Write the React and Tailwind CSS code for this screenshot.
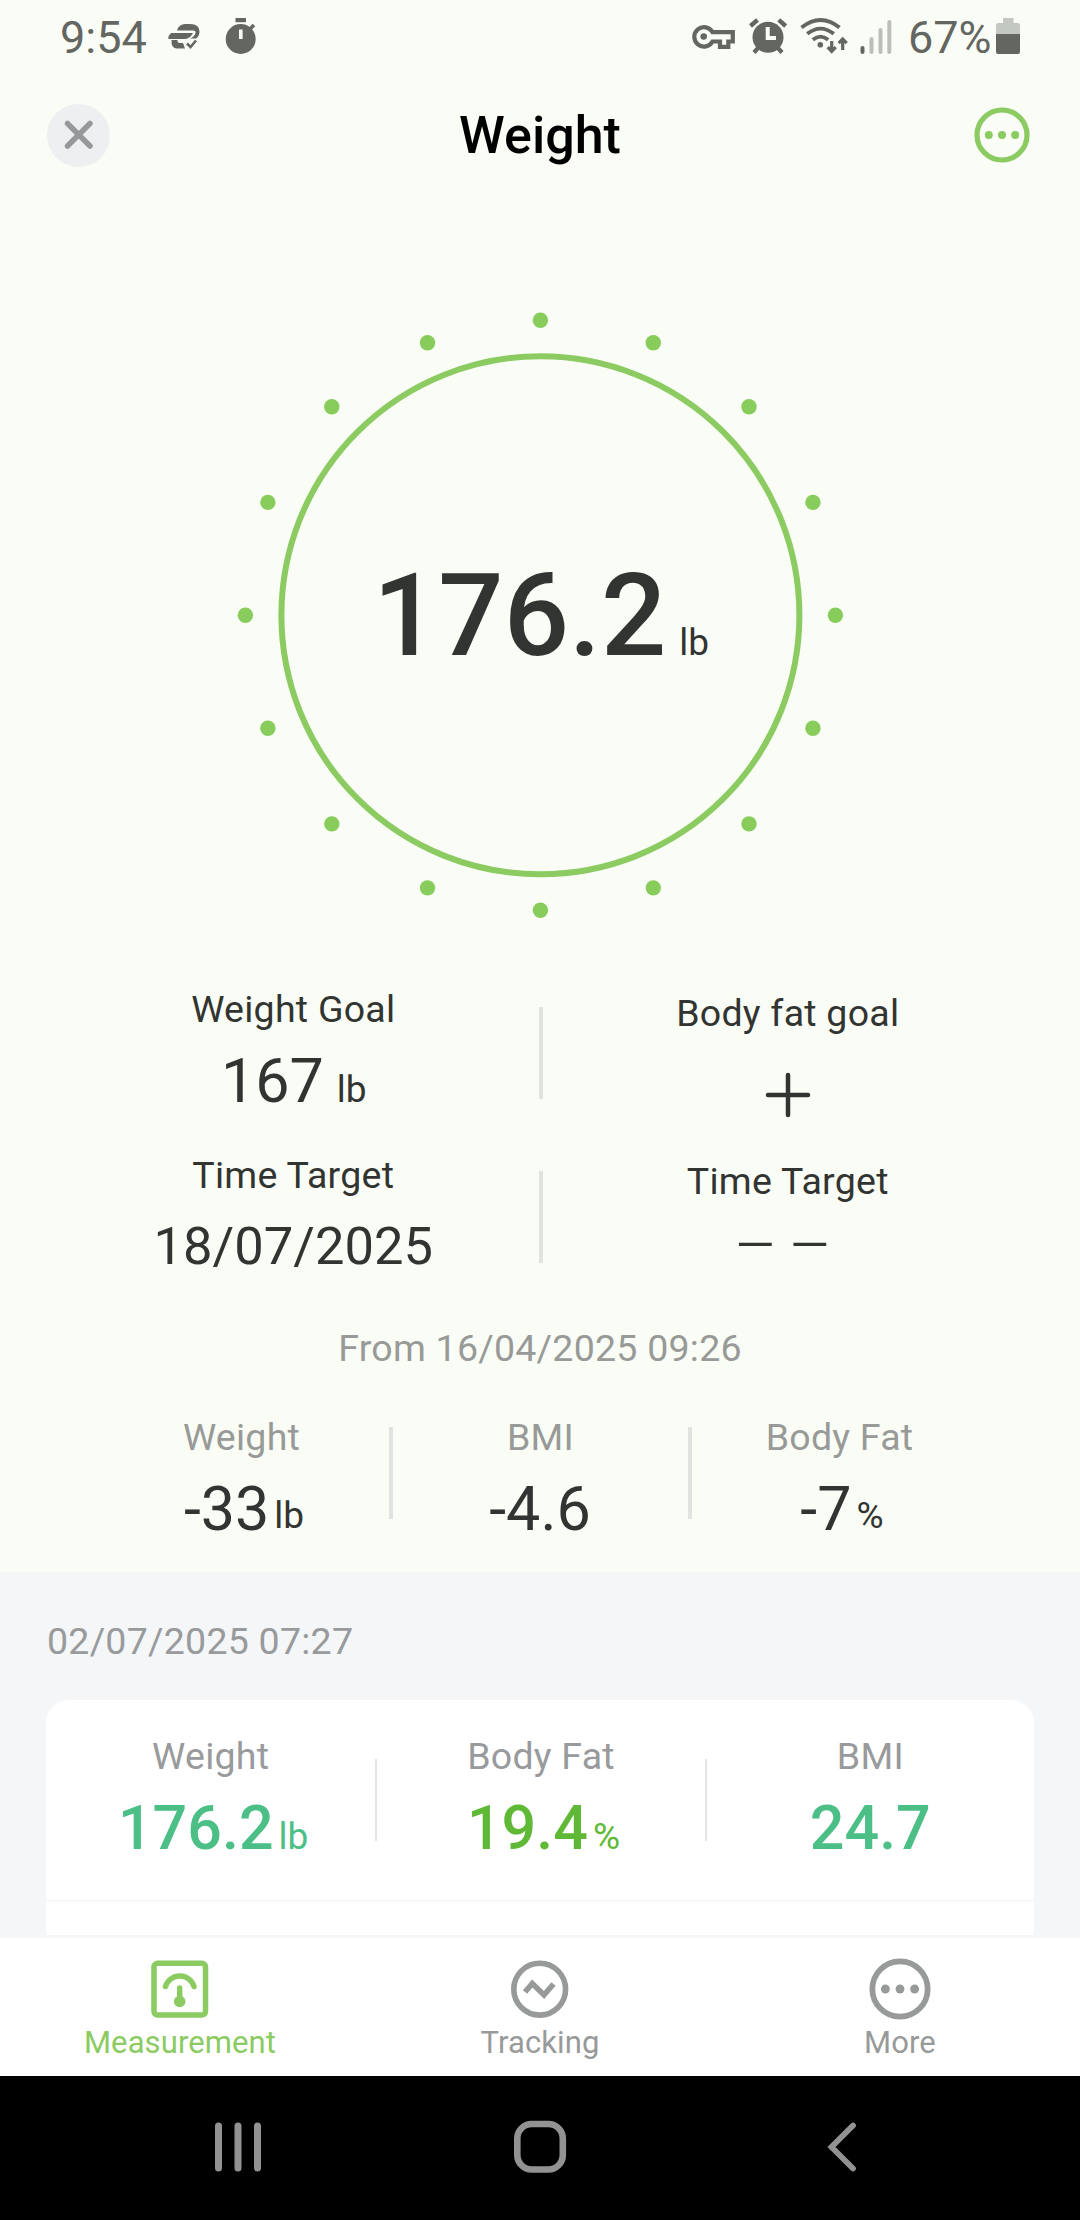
const DOTS = Array.from({ length: 16 }, (_, i) => {
  const angle = (i * Math.PI) / 8;
  return { x: 300.4 + 295 * Math.cos(angle), y: 300.3 + 295 * Math.sin(angle) };
});

const CHANGES = [
  { label: 'Weight', value: '-33', unit: 'lb' },
  { label: 'BMI', value: '-4.6' },
  { label: 'Body Fat', value: '-7', unit: '%' },
];

const READINGS = [
  { label: 'Weight', value: '176.2', unit: 'lb', color: 'text-[#4bbf86]' },
  { label: 'Body Fat', value: '19.4', unit: '%', color: 'text-[#5fb936]' },
  { label: 'BMI', value: '24.7', color: 'text-[#4bbf86]' },
];

function StatusBar() {
  return (
    <div className="flex h-[75px] items-center pl-[60px] text-[45px] leading-none text-[#646661]">
      <span className="w-[108px]">9:54</span>
      <svg className="h-[75px] w-[32px]" viewBox="168 0 32 75" fill="currentColor">
        <path d="M177 30.500Q179 24 185 24H190Q199.500 24 199.500 31.500Q199.500 36 196 38.500H190Q194.500 36.500 195.500 33Q196 30.500 193 30.500Z" />
        <path d="M171 33H193Q190 39 184 39H168.200Q168.500 35 171 33Z" />
        <path d="M171.500 40H177.500Q177 43 180 43H183L185 48.500H177Q171 48.500 171.500 40Z" />
        <path d="M187 43.500L190.500 47L196 40.500" fill="none" stroke="currentColor" strokeWidth="2.600" />
      </svg>
      <svg className="ml-[24px] h-[75px] w-[34px]" viewBox="224 0 34 75" fill="currentColor">
        <circle cx="240.700" cy="39" r="15" />
        <rect x="235.500" y="18" width="10.500" height="4.200" />
        <path d="M249.500 29.500L254 25" stroke="currentColor" strokeWidth="3.600" />
        <rect x="239" y="29.500" width="3.600" height="9.500" fill="#fafdf5" />
      </svg>

      <svg className="ml-auto h-[75px] w-[45px]" viewBox="691 0 45 75" fill="none" stroke="currentColor" strokeWidth="4.200">
        <path d="M712.500 32.200H732.800V41.500H728.300V46.900H720V41.500H712.500A9.700 9.700 0 1 1 712.500 32.200Z" />
        <circle cx="703.700" cy="36.500" r="3.300" fill="currentColor" stroke="none" />
      </svg>
      <svg className="ml-[12px] h-[75px] w-[42px]" viewBox="748 0 42 75" fill="none" stroke="currentColor">
        <circle cx="768" cy="37.300" r="15.500" fill="currentColor" stroke="none" />
        <path d="M750.500 26L757.500 19.800M778.700 19.800L785.700 26" strokeWidth="4.400" />
        <path d="M758.500 47.500L754 52.500M777.500 47.500L782 52.500" strokeWidth="4.200" />
        <path d="M767.700 27V38H776" stroke="#fafdf5" strokeWidth="4" />
      </svg>
      <svg className="ml-[8px] h-[75px] w-[52px]" viewBox="798 0 52 75" fill="none" stroke="currentColor" strokeWidth="3.800">
        <circle cx="820.300" cy="44.700" r="2.800" fill="currentColor" stroke="none" />
        <path d="M801.500 27.500Q820.500 12.500 839.500 27.500M807.200 33.800Q820.500 23.500 833.800 33.800M812.800 39.800Q820.500 33.500 828.200 39.800" />
        <path d="M831.700 41V51M827.700 47.200L831.700 51.400L835.700 47.200M842.700 50V40M838.700 43.200L842.700 39L846.700 43.200" strokeWidth="3.200" />
      </svg>
      <svg className="ml-[9px] h-[75px] w-[34px]" viewBox="859 0 34 75" fill="none" stroke="#bcbfb9" strokeWidth="4" strokeLinecap="round">
        <path d="M862.500 48V52" stroke="currentColor" />
        <path d="M871.500 39V52M880.500 30V52M889.300 22V52" />
      </svg>
      <span className="ml-[15px] w-[88px]">67%</span>
      <svg className="mr-[60px] h-[75px] w-[24px]" viewBox="996 0 24 75">
        <path d="M1003 18H1013.500V23H1018Q1020 23 1020 25V34H996V25Q996 23 998 23H1003Z" fill="#c4c8c2" />
        <path d="M996 34H1020V52Q1020 54 1018 54H998Q996 54 996 52Z" fill="currentColor" />
      </svg>
    </div>
  );
}

function Header() {
  return (
    <div className="flex h-[120px] items-center justify-between px-[47px]">
      <button className="flex size-[63px] items-center justify-center rounded-full bg-[#eeeff1]">
        <svg className="size-[30px]" viewBox="0 0 30 30" fill="none" stroke="#97989a" strokeWidth="5.500" strokeLinecap="round">
          <path d="M3.500 3.500L26 26M26 3.500L3.500 26" />
        </svg>
      </button>
      <h1 className="pt-[2px] text-[52px] font-medium leading-[60px] text-black">Weight</h1>
      <button className="flex w-[63px] justify-end pr-[3px]">
        <MoreIcon className="size-[56px] text-[#8bcb62]" />
      </button>
    </div>
  );
}

function MoreIcon({ className }) {
  return (
    <svg className={className} viewBox="0 0 56 56" fill="currentColor">
      <circle cx="28" cy="28" r="25" fill="none" stroke="currentColor" strokeWidth="5.200" />
      <circle cx="14.800" cy="28" r="4" />
      <circle cx="28" cy="28" r="4" />
      <circle cx="41.200" cy="28" r="4" />
    </svg>
  );
}

function Gauge() {
  return (
    <div className="flex h-[790px] justify-center pt-[115px]">
      <div className="relative size-[610px]">
        <svg className="size-[610px]" viewBox="-5 -5 610 610" fill="#88cc5c">
          <circle cx="300.400" cy="300.300" r="259" fill="none" stroke="#8bcb62" strokeWidth="6" />
          {DOTS.map((dot, i) => (
            <circle key={i} cx={dot.x} cy={dot.y} r="7.700" />
          ))}
        </svg>
        <div className="absolute inset-0 flex items-center justify-center pl-[2px] pt-[28px] text-[#323432]">
          <p className="text-[115px] font-medium leading-[136px]">
            176.2<span className="ml-[13px] text-[37px] font-normal">lb</span>
          </p>
        </div>
      </div>
    </div>
  );
}

function Label({ children }) {
  return <p className="pb-[2px] text-[37.5px] leading-[48px] tracking-[0.25px]">{children}</p>;
}

function Divider({ className }) {
  return <div className={`w-[4px] shrink-0 bg-[#e0e3e0] ${className}`} />;
}

function Goals() {
  return (
    <div className="px-[47px] text-center text-[#323432]">
      <div className="flex h-[166px]">
        <div className="flex-1 pl-[1px]">
          <Label>Weight Goal</Label>
          <p className="mt-[10px] pl-[1px] text-[61px] leading-[72px]">
            167<span className="ml-[13px] text-[37px]">lb</span>
          </p>
        </div>
        <Divider className="mt-[22px] h-[92px]" />
        <div className="flex flex-1 flex-col items-center pt-[4px]">
          <Label>Body fat goal</Label>
          <svg className="mt-[33px] size-[46px]" viewBox="0 0 46 46" fill="none" stroke="currentColor" strokeWidth="4.500" strokeLinecap="round">
            <path d="M23 3V43M3 23H43" />
          </svg>
        </div>
      </div>
      <div className="flex h-[173px]">
        <div className="flex-1 pl-[1px]">
          <Label>Time Target</Label>
          <p className="mt-[15px] text-[52.5px] leading-[60px]">18/07/2025</p>
        </div>
        <Divider className="mt-[20px] h-[92px]" />
        <div className="flex-1 pt-[6px]">
          <Label>Time Target</Label>
          <p className="mt-[2px] pr-[10px] text-[67px] font-light leading-[72px] [word-spacing:-5.5px]">– –</p>
        </div>
      </div>
    </div>
  );
}

function Changes() {
  return (
    <div className="h-[248px] text-center">
      <div className="text-[#989a98]">
        <Label>From 16/04/2025 09:26</Label>
      </div>
      <div className="mt-[39px] flex justify-center">
        {CHANGES.map((item, i) => (
          <div key={item.label} className="flex">
            {i > 0 && <Divider className="mt-[14px] h-[92px]" />}
            <div className="w-[295px]">
              <div className="pl-[1px] text-[#989a98]">
                <Label>{item.label}</Label>
              </div>
              <p className={`mt-[10px] text-[61px] leading-[72px] text-[#323432] ${item.unit ? 'pl-[6px]' : ''}`}>
                {item.value}
                {item.unit && <span className="ml-[5px] align-[2px] text-[37px] leading-none">{item.unit}</span>}
              </p>
            </div>
          </div>
        ))}
      </div>
    </div>
  );
}

function ReadingCard() {
  return (
    <div className="h-[366px] overflow-hidden bg-[#f5f6f8] px-[46px] pt-[45px]">
      <div className="pl-[1px] text-[#989a9c]">
        <Label>02/07/2025 07:27</Label>
      </div>
      <div className="mt-[33px] h-[235px] rounded-t-[23px] bg-white text-center">
        <div className="flex h-[201px] border-b border-[#f1f2f3] pt-[32px]">
          {READINGS.map((item, i) => (
            <div key={item.label} className="flex flex-1">
              {i > 0 && <div className="mt-[27px] h-[82px] w-[2px] bg-[#e3e4e5]" />}
              <div className="flex-1">
                <div className="text-[#989a9c]">
                  <Label>{item.label}</Label>
                </div>
                <p className={`mt-[10px] text-[61px] font-medium leading-[72px] ${item.color} ${item.unit ? 'pl-[5px]' : ''}`}>
                  {item.value}
                  {item.unit && <span className="ml-[5px] text-[37px] font-normal">{item.unit}</span>}
                </p>
              </div>
            </div>
          ))}
        </div>
      </div>
    </div>
  );
}

function Tab({ label, color, children }) {
  return (
    <button className={`flex flex-1 flex-col items-center pt-[20px] ${color}`}>
      {children}
      <span className="mt-[3px] text-[31px] leading-[40px] tracking-[0.1px]">{label}</span>
    </button>
  );
}

function TabBar() {
  return (
    <div className="flex h-[138px] bg-white">
      <Tab label="Measurement" color="text-[#8bcb62]">
        <svg className="size-[62px]" viewBox="0 0 62 62" fill="none" stroke="currentColor" strokeWidth="5.500" strokeLinecap="round">
          <rect x="5" y="5.300" width="51.500" height="51.700" rx="3.500" />
          <path d="M16.500 28.500A14.900 14.900 0 0 1 45 28.500M30.700 30V44" />
          <circle cx="30.700" cy="43.500" r="5.800" fill="currentColor" stroke="none" />
        </svg>
      </Tab>
      <Tab label="Tracking" color="text-[#989a9a]">
        <svg className="size-[62px]" viewBox="0 0 62 62" fill="none" stroke="currentColor" strokeWidth="5.600">
          <circle cx="30.700" cy="31.200" r="25.900" />
          <path d="M16 34L23.300 25.500L35 37L44.500 26" />
        </svg>
      </Tab>
      <Tab label="More" color="text-[#989a9a]">
        <MoreIcon className="size-[62px]" />
      </Tab>
    </div>
  );
}

function SystemNav() {
  return (
    <div className="flex h-[144px] items-center justify-center bg-black text-[#929292]">
      <svg className="size-[60px]" viewBox="0 0 60 60" fill="none" stroke="currentColor" strokeWidth="7" strokeLinecap="round">
        <path d="M10.500 8V50M30 8V50M49.500 8V50" />
      </svg>
      <svg className="ml-[242px] size-[60px]" viewBox="0 0 60 60" fill="none" stroke="currentColor" strokeWidth="6.600">
        <rect x="7.300" y="6" width="45.500" height="45.500" rx="14.500" />
      </svg>
      <svg className="ml-[242px] size-[60px]" viewBox="0 0 60 60" fill="none" stroke="currentColor" strokeWidth="5.800" strokeLinecap="round">
        <path d="M41 7.500L19.500 29L41 50.500" />
      </svg>
    </div>
  );
}

export default function App() {
  return (
    <div className="h-[2220px] w-[1080px] overflow-hidden bg-[#fafdf5] font-['Roboto',sans-serif]">
      <StatusBar />
      <Header />
      <Gauge />
      <Goals />
      <Changes />
      <ReadingCard />
      <TabBar />
      <SystemNav />
    </div>
  );
}
